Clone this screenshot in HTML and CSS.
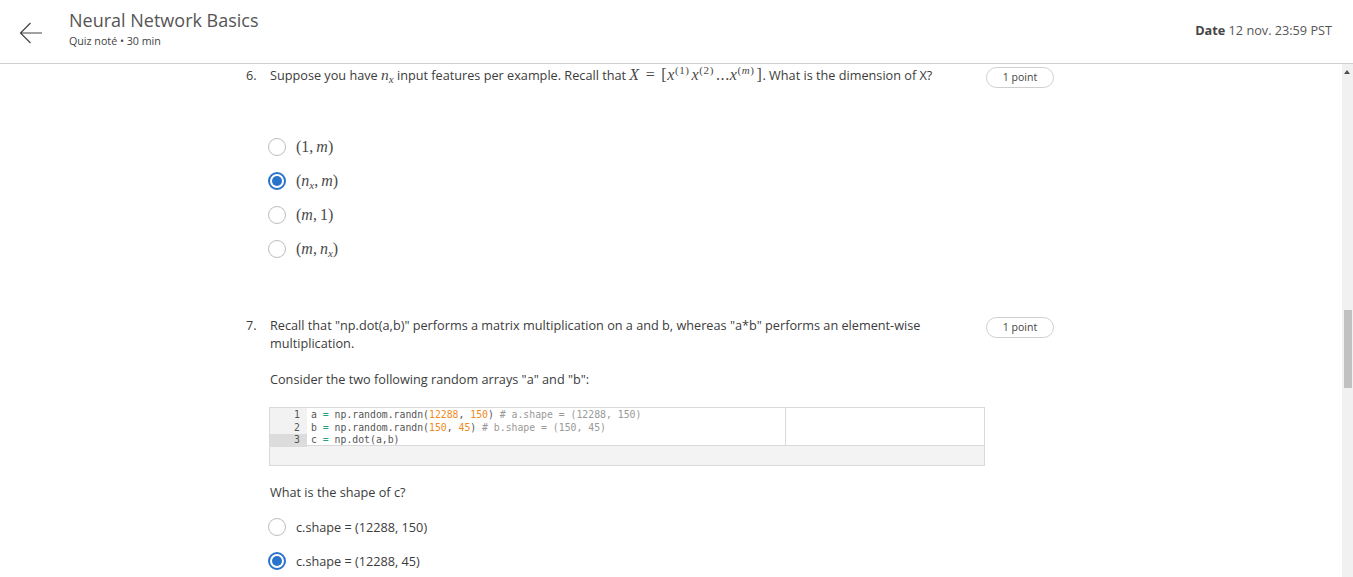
FILE: index.html
```html
<!DOCTYPE html>
<html lang="fr">
<head>
<meta charset="utf-8">
<title>Neural Network Basics</title>
<link rel="stylesheet" href="styles.css">
</head>
<body>
<header class="topbar">
  <div class="back">
    <svg width="24" height="22" viewBox="0 0 24 22"><path d="M23 11H1.5M11.5 1L1.5 11l10 10" fill="none" stroke="#444" stroke-width="1.2"/></svg>
  </div>
  <div class="titles">
    <div class="title">Neural Network Basics</div>
    <div class="subtitle">Quiz noté • 30 min</div>
  </div>
  <div class="due"><b>Date</b> 12 nov. 23:59 PST</div>
</header>
<div class="main">
  <div class="content">
    <section class="question q6">
      <div class="num">6.</div>
      <div class="qbody">
        <p class="qtext">Suppose you have <span class="m"><i>n</i><sub><i>x</i></sub></span> input features per example. Recall that <span class="m f"><i>X</i><span class="rel">=</span>[<i>x</i><sup>(1)</sup><i>x</i><sup>(2)</sup>...<i>x</i><sup>(<i>m</i>)</sup>]</span>. What is the dimension of X?</p>
        <div class="options opts6">
          <label class="opt"><span class="radio"></span><span class="m">(1,<span class="sp"></span><i>m</i>)</span></label>
          <label class="opt"><span class="radio on"></span><span class="m">(<i>n</i><sub><i>x</i></sub>,<span class="sp"></span><i>m</i>)</span></label>
          <label class="opt"><span class="radio"></span><span class="m">(<i>m</i>,<span class="sp"></span>1)</span></label>
          <label class="opt"><span class="radio"></span><span class="m">(<i>m</i>,<span class="sp"></span><i>n</i><sub><i>x</i></sub>)</span></label>
        </div>
      </div>
      <div class="points">1 point</div>
    </section>
    <section class="question q7">
      <div class="num">7.</div>
      <div class="qbody">
        <p class="qtext">Recall that "np.dot(a,b)" performs a matrix multiplication on a and b, whereas "a*b" performs an element-wise multiplication.</p>
        <p class="qtext para">Consider the two following random arrays "a" and "b":</p>
        <div class="code">
          <div class="editor">
            <div class="gutter">
              <div class="ln">1</div>
              <div class="ln">2</div>
              <div class="ln cur">3</div>
            </div>
            <div class="src">
              <div class="cl">a <span class="op">=</span> np.random.randn(<span class="n">12288</span>, <span class="n">150</span>) <span class="c"># a.shape = (12288, 150)</span></div>
              <div class="cl">b <span class="op">=</span> np.random.randn(<span class="n">150</span>, <span class="n">45</span>) <span class="c"># b.shape = (150, 45)</span></div>
              <div class="cl">c <span class="op">=</span> np.dot(a,b)</div>
            </div>
            <div class="out"></div>
          </div>
          <div class="strip"></div>
        </div>
        <p class="qtext ask">What is the shape of c?</p>
        <div class="options opts7">
          <label class="opt"><span class="radio"></span><span>c.shape = (12288, 150)</span></label>
          <label class="opt"><span class="radio on"></span><span>c.shape = (12288, 45)</span></label>
        </div>
      </div>
      <div class="points">1 point</div>
    </section>
  </div>
  <div class="scrollbar">
    <div class="arrow"></div>
    <div class="thumb"></div>
  </div>
</div>
</body>
</html>
```
FILE: styles.css
```css
* { box-sizing: border-box; }
html, body { margin: 0; padding: 0; }
body {
  width: 1353px;
  height: 577px;
  overflow: hidden;
  background: #fff;
  font-family: "Open Sans", "Liberation Sans", sans-serif;
  color: #3c3c3c;
}
.topbar {
  height: 64px;
  border-bottom: 1px solid #cfcfcf;
  display: flex;
  align-items: flex-start;
}
.back {
  width: 69px;
  padding: 22px 0 0 19px;
}
.back svg { display: block; }
.titles { flex: 1; padding-top: 8px; }
.title {
  font-size: 18px;
  line-height: 25px;
  color: #555;
}
.subtitle {
  font-size: 10.7px;
  line-height: 14px;
  margin-top: 1px;
  color: #444;
}
.due {
  padding: 21px 21px 0 0;
  font-size: 12.7px;
  line-height: 18px;
  color: #555;
}
.due b { font-weight: 700; color: #444; }
.main {
  display: flex;
  height: 513px;
}
.content {
  flex: 1;
  padding: 2px 0 0 246px;
}
.question {
  display: flex;
  align-items: flex-start;
}
.num {
  width: 24px;
  font-size: 12.7px;
  line-height: 18px;
}
.qbody { width: 716px; }
.qtext {
  margin: 0;
  font-size: 12.7px;
  line-height: 18px;
}
.m {
  font-family: "Liberation Serif", "DejaVu Serif", serif;
  font-size: 15.5px;
  color: #4a4a4a;
}
.m i { font-style: italic; }
.m sub, .m sup { font-size: 11px; line-height: 0; }
.m sub { vertical-align: -3px; }
.m sup { vertical-align: 6px; margin-right: 1px; }
.f { font-size: 16px; letter-spacing: 0.6px; }
.f sup { margin-right: 2px; }
.rel { margin: 0 6px; }
.sp { display: inline-block; width: 3px; }
.points {
  margin-top: 1px;
  width: 68px;
  height: 21px;
  border: 1px solid #cfcfcf;
  border-radius: 11px;
  font-size: 10.5px;
  line-height: 19px;
  text-align: center;
  color: #444;
}
.options { display: flex; flex-direction: column; }
.opts6 { margin-top: 46px; }
.opt {
  height: 34px;
  display: flex;
  align-items: center;
  font-size: 12.7px;
  margin-left: -2px;
}
.radio {
  width: 18px;
  height: 18px;
  border: 1.5px solid #bdbdbd;
  border-radius: 50%;
  margin-right: 10px;
  flex: none;
  position: relative;
}
.radio.on { border: 2px solid #2a73cc; }
.radio.on::after {
  content: "";
  position: absolute;
  left: 2px;
  top: 2px;
  width: 10px;
  height: 10px;
  border-radius: 50%;
  background: #2a73cc;
}
.opts6 .opt .m { font-size: 16px; }
.q7 { margin-top: 50px; }
.para { margin-top: 18px; }
.code {
  margin-top: 19px;
  margin-left: -1px;
  width: 716px;
  border: 1px solid #d9d9d9;
  background: #f3f3f3;
}
.editor {
  display: flex;
  background: #fff;
  height: 38px;
  border-bottom: 1px solid #d9d9d9;
  font-family: "DejaVu Sans Mono", "Liberation Mono", monospace;
  font-size: 9.8px;
  line-height: 12.5px;
  color: #555;
}
.gutter {
  width: 37px;
  background: #f2f2f2;
  padding-top: 1px;
}
.ln { text-align: right; padding-right: 7px; color: #555; }
.ln.cur { background: #dcdcdc; }
.src {
  width: 478px;
  padding: 1px 0 0 4px;
}
.cl { white-space: pre; }
.op { color: #21a17b; }
.n { color: #f08a1c; }
.c { color: #999; }
.out {
  flex: 1;
  border-left: 1px solid #d9d9d9;
}
.strip { height: 19px; }
.ask { margin-top: 17px; }
.opts7 { margin-top: 9px; }
.scrollbar {
  width: 11px;
  background: #f1f1f1;
  position: relative;
}
.arrow {
  position: absolute;
  left: 2px;
  top: 6px;
  width: 0;
  height: 0;
  border-left: 3.5px solid transparent;
  border-right: 3.5px solid transparent;
  border-bottom: 4px solid #505050;
}
.thumb {
  position: absolute;
  left: 2px;
  top: 246px;
  width: 8px;
  height: 78px;
  background: #c1c1c1;
}
```
